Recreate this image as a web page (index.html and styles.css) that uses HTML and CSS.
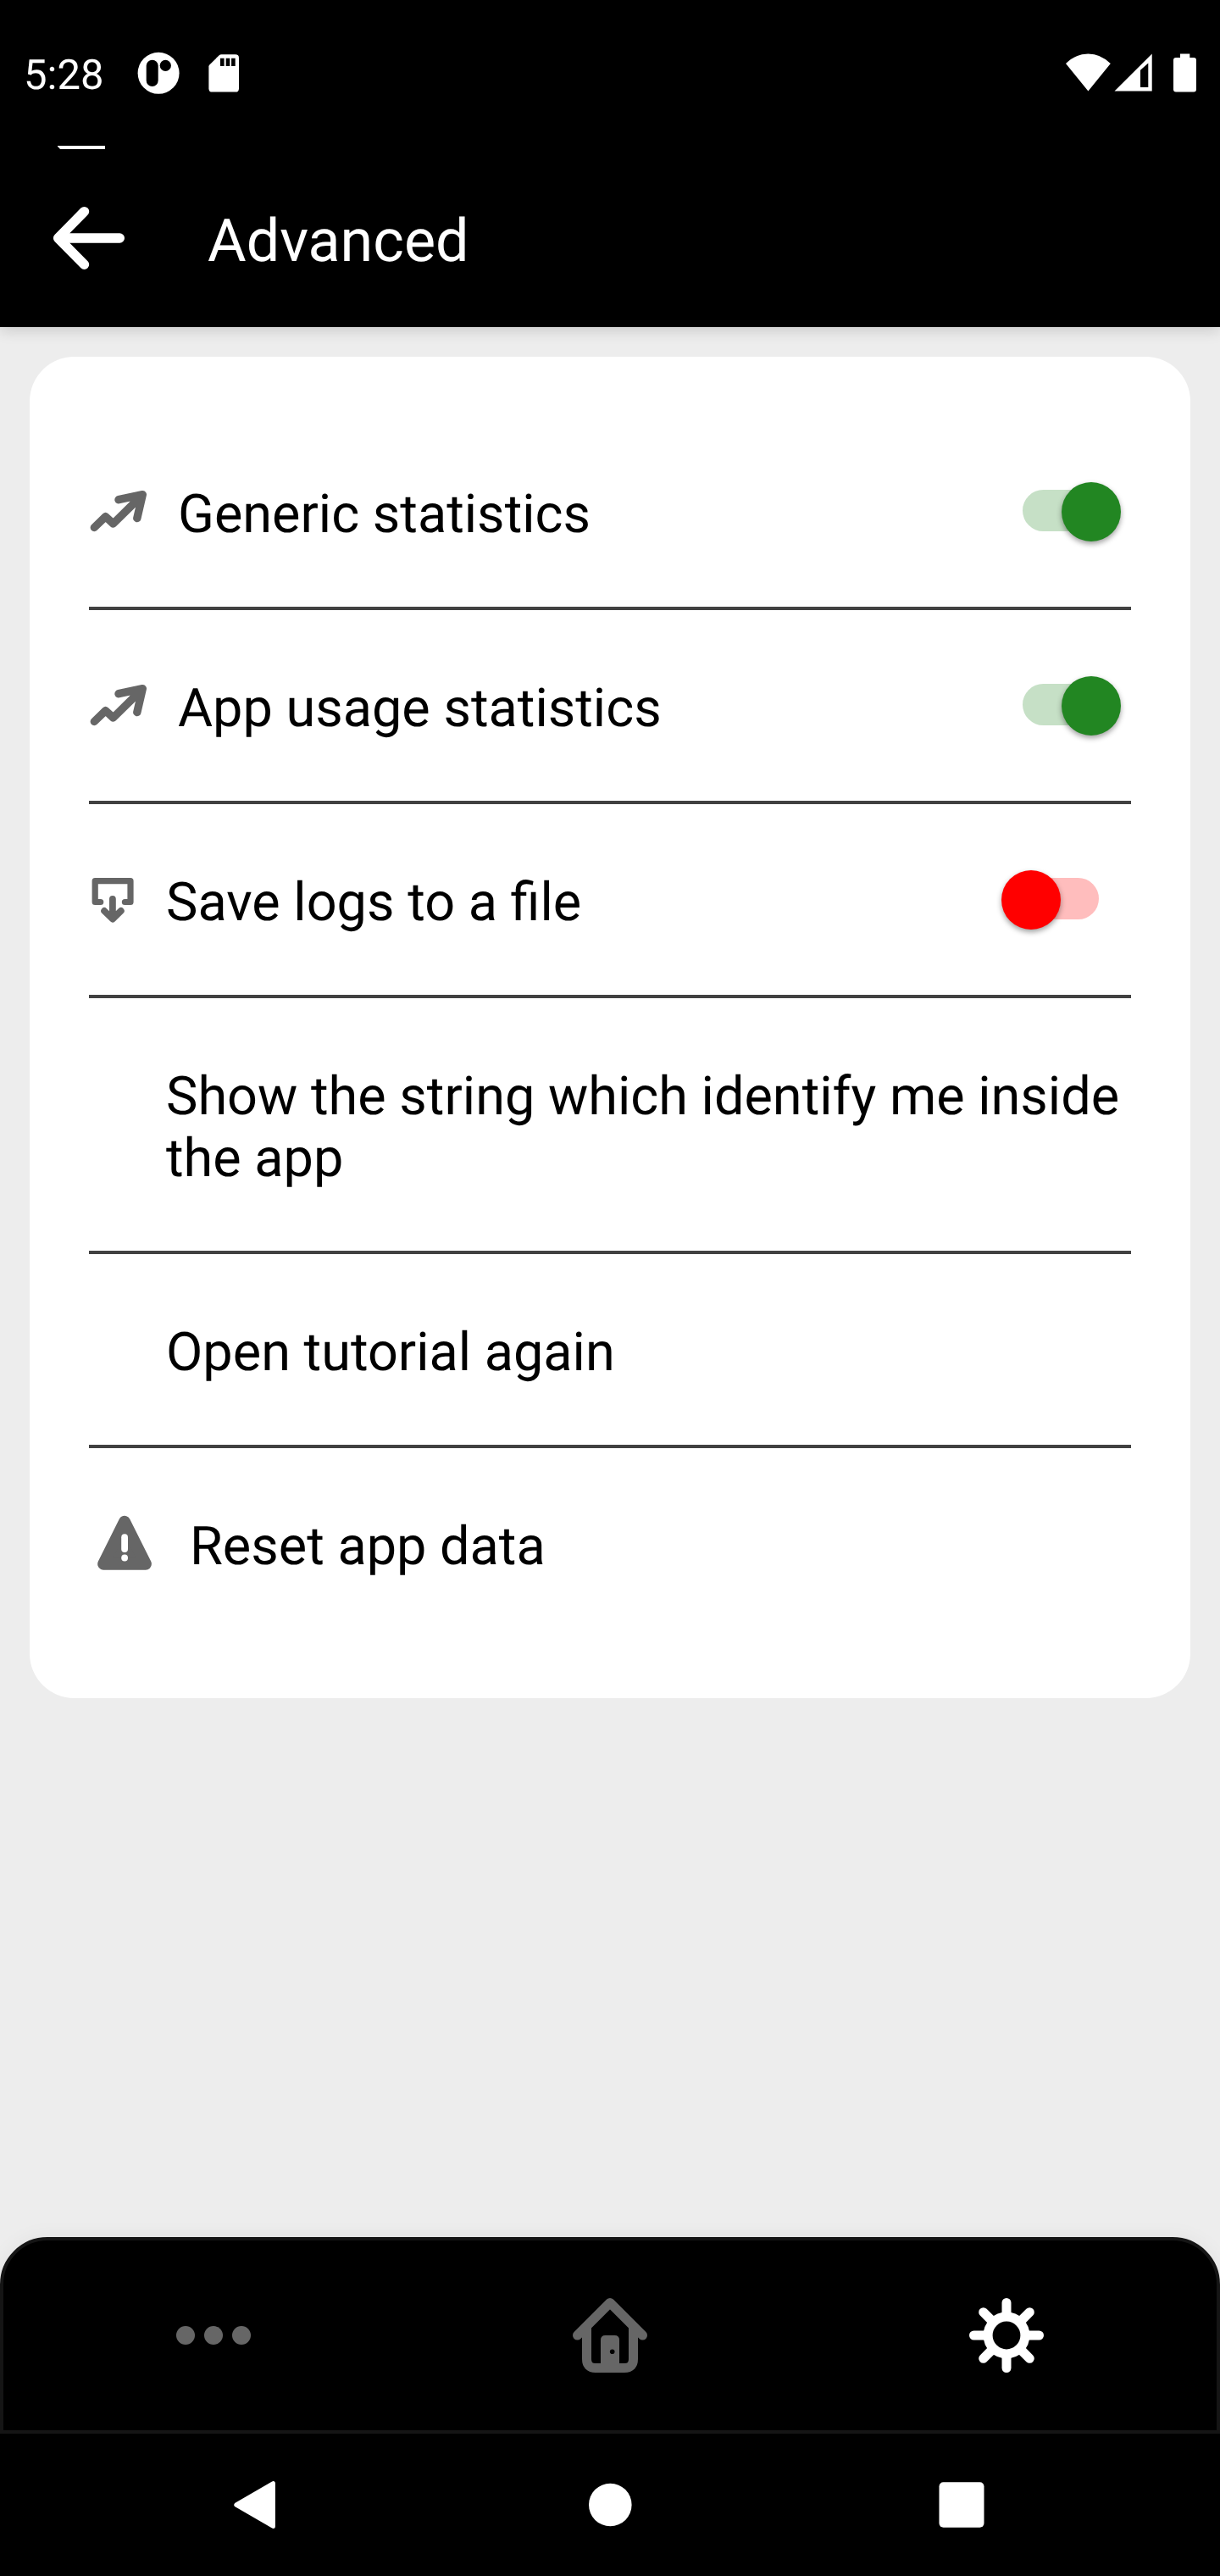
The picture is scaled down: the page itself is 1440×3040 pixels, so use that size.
FILE: index.html
```html
<!DOCTYPE html>
<html lang="en">
<head>
<meta charset="utf-8">
<title>Advanced</title>
<link rel="stylesheet" href="styles.css">
</head>
<body>
<div class="screen">
  <header class="top">
    <div class="status">
      <span class="clock">5:28</span>
      <svg class="status-app" width="50" height="50" viewBox="162 61 50 50"><circle cx="187.1" cy="86.3" r="24.5" fill="#fff"/><rect x="172.7" y="70.7" width="14" height="31.3" rx="7"/><circle cx="195.3" cy="77.4" r="6.6"/></svg>
      <svg class="status-sd" width="36" height="50" viewBox="246 61 36 50"><path fill="#fff" d="M261.3 64.2H277.8Q282 64.2 282 68.4V104.400Q282 108.600 277.800 108.600H250.600Q246.400 108.600 246.400 104.400V78.600Q246.400 77.400 247.300 76.500L258.700 65.200Q259.800 64.200 261.300 64.200Z"/><path d="M260 68.700h4.600V78H260zM266.700 68.700h4.600V78h-4.600zM273.100 68.700h4.600V78h-4.600z"/></svg>
      <svg class="status-signal" width="160" height="50" viewBox="1255 61 160 50" fill="#fff"><path d="M1284.400 107.400L1258 75Q1269.500 63.400 1284.400 63.400T1310.800 75Z"/><path fill-rule="evenodd" d="M1315.500 107.600L1359.700 63.600V107.600ZM1346 82.800V103H1355.300V74.400Z"/><path d="M1393 68V63.400H1404.300V68H1409Q1412 68 1412 71V105.600Q1412 108.600 1409 108.600H1388Q1385 108.600 1385 105.600V71Q1385 68 1388 68Z"/></svg>
    </div>
    <svg class="sliver" width="56" height="4" viewBox="0 0 56 4"><path fill="#fff" d="M0 0H56V4H3Q1.500 2 0 1Z"/></svg>
    <div class="titlebar">
      <svg class="back" width="88" height="76" viewBox="61 243 88 76"><path d="M99.500 249.600L68.600 281L99.500 312.300M68.600 281H141.300" fill="none" stroke="#fff" stroke-width="11.400" stroke-linecap="round" stroke-linejoin="round"/></svg>
      <h1 class="title">Advanced</h1>
    </div>
  </header>

  <main class="content">
    <section class="card">
      <div class="row">
        <svg class="icon icon-trend" width="70" height="52" viewBox="105 578 70 52"><path d="M111.300 622.500L124.600 609.600L133.600 618L168.300 583.800M140 589.700L168.300 583.600L161.800 611.600" fill="none" stroke="#666" stroke-width="9.400" stroke-linecap="round" stroke-linejoin="round"/></svg>
        <span class="label label-trend">Generic statistics</span>
        <span class="switch on"><span class="thumb"></span></span>
      </div>
      <div class="row">
        <svg class="icon icon-trend" width="70" height="52" viewBox="105 578 70 52"><path d="M111.300 622.500L124.600 609.600L133.600 618L168.300 583.800M140 589.700L168.300 583.600L161.800 611.600" fill="none" stroke="#666" stroke-width="9.400" stroke-linecap="round" stroke-linejoin="round"/></svg>
        <span class="label label-trend">App usage statistics</span>
        <span class="switch on"><span class="thumb"></span></span>
      </div>
      <div class="row">
        <svg class="icon icon-save" width="56" height="56" viewBox="105 1034 56 56"><g fill="none" stroke="#666" stroke-width="7.200" stroke-linecap="round" stroke-linejoin="round"><path d="M118.700 1064.500H112.200V1039.700H154V1064.500H147.400"/><path stroke-width="7.800" d="M132.900 1060.800V1084M123.100 1074.900L132.900 1084.600L142.800 1074.900"/></g></svg>
        <span class="label">Save logs to a file</span>
        <span class="switch off"><span class="thumb"></span></span>
      </div>
      <div class="row">
        <span class="label">Show the string which identify me inside<br>the app</span>
      </div>
      <div class="row">
        <span class="label">Open tutorial again</span>
      </div>
      <div class="row">
        <svg class="icon icon-warning" width="70" height="68" viewBox="112 1787 70 68"><path d="M147 1795.800L122.200 1845.700H171.900Z" fill="#666" stroke="#666" stroke-width="14" stroke-linejoin="round"/><path d="M147.100 1814.200V1828" stroke="#fff" stroke-width="7.800" stroke-linecap="round"/><circle cx="147.100" cy="1838.500" r="3.900" fill="#fff"/></svg>
        <span class="label label-warning">Reset app data</span>
      </div>
    </section>
  </main>

  <nav class="tabs">
    <svg width="88" height="88" viewBox="208 2712 88 88" fill="#666"><circle cx="219" cy="2756" r="11"/><circle cx="252" cy="2756" r="11"/><circle cx="285" cy="2756" r="11"/></svg>
    <svg width="88" height="88" viewBox="676 2712 88 88"><g fill="none" stroke="#666" stroke-width="11" stroke-linecap="round" stroke-linejoin="round"><path d="M681.500 2756L720 2717.500L758.500 2756"/><path stroke-linecap="butt" d="M692.500 2747V2784Q692.500 2794.500 703 2794.500H737Q747.500 2794.500 747.500 2784V2747"/></g><path fill="#666" d="M709 2792V2761.500Q709 2756 714.500 2756H725.500Q731 2756 731 2761.500V2792Z"/><circle cx="722.700" cy="2775.200" r="2.800"/></svg>
    <svg width="88" height="88" viewBox="-44 -44 88 88" fill="none" stroke="#fff" stroke-width="11" stroke-linecap="round"><circle r="21.900"/><path d="M0-24V-38.500M0 24V38.500M-24 0H-38.500M24 0H38.500M-17-17L-27.300-27.300M17-17L27.300-27.300M-17 17L-27.300 27.300M17 17L27.300 27.300"/></svg>
  </nav>

  <footer class="sysnav">
    <svg width="56" height="60" viewBox="272 2926 56 60"><path fill="#fff" stroke="#fff" stroke-width="5" stroke-linejoin="round" d="M278.800 2956L322.400 2930.600V2981.400Z"/></svg>
    <svg class="sys-home" width="56" height="60" viewBox="692 2926 56 60"><circle cx="720.300" cy="2956" r="25.300" fill="#fff"/></svg>
    <svg width="56" height="60" viewBox="1107 2926 56 60"><rect x="1108.500" y="2929.200" width="53" height="53.500" rx="5" fill="#fff"/></svg>
  </footer>
</div>
</body>
</html>
```
FILE: styles.css
```css
* {
  box-sizing: border-box;
}

body {
  margin: 0;
  background: #000;
  font-family: Roboto, "Liberation Sans", sans-serif;
  text-rendering: geometricPrecision;
}

svg {
  display: block;
  flex: none;
}

.screen {
  width: 1440px;
  height: 3040px;
  display: flex;
  flex-direction: column;
  background: #ededed;
  overflow: hidden;
}

.top {
  height: 386px;
  flex: none;
  background: #000;
  color: #fff;
  box-shadow: 0 4px 16px rgba(0, 0, 0, 0.15);
}

.status {
  height: 172px;
  display: flex;
  align-items: flex-start;
  padding: 61px 25px 0 28px;
}

.clock {
  width: 134px;
  margin-top: 1px;
  font-size: 49px;
  line-height: 53px;
}

.status-sd {
  margin-left: 34px;
}

.status-signal {
  margin-left: auto;
}

.sliver {
  margin-left: 68px;
}

.titlebar {
  height: 210px;
  display: flex;
  align-items: flex-start;
  padding: 67px 0 0 61px;
}

.title {
  margin: 1px 0 0 96px;
  font-size: 70px;
  font-weight: 400;
  line-height: 82px;
}

.content {
  flex: 1;
  padding: 35px 35px 0;
}

.card {
  padding: 70px;
  border-radius: 52.5px;
  background: #fff;
}

.row {
  display: flex;
  align-items: flex-start;
  padding: 80px 0 72px;
  border-bottom: 4px solid #414141;
}

.row:last-child {
  border-bottom: 0;
}

.label {
  font-size: 63px;
  line-height: 73px;
  color: #000;
  margin-left: 91px;
  white-space: nowrap;
}

.icon + .label {
  margin-left: 35px;
}

.icon-trend {
  margin-top: 7px;
}

.icon-save {
  margin-top: 5px;
}

.icon-warning {
  margin: -2px 0 0 7px;
}

.icon + .label-warning {
  margin-left: 42px;
}

.switch {
  position: relative;
  width: 90px;
  height: 49px;
  margin: 7px 38px 0 auto;
  border-radius: 24.500px;
}

.switch.on {
  background: #c6e0c6;
}

.switch.off {
  background: #ffbdbd;
}

.thumb {
  position: absolute;
  top: -9.500px;
  width: 70px;
  height: 70px;
  border-radius: 50%;
  box-shadow: 0 3px 6px rgba(0, 0, 0, 0.38);
}

.on .thumb {
  right: -26px;
  background: #228622;
}

.off .thumb {
  left: -25.500px;
  background: #ff0000;
}

.tabs {
  height: 232px;
  flex: none;
  display: flex;
  justify-content: space-between;
  align-items: center;
  padding: 0 204px;
  border: 4px solid #151515;
  border-radius: 56px 56px 0 0;
  background: #000;
  box-shadow: 0 0 24px rgba(0, 0, 0, 0.05);
}

.sysnav {
  height: 168px;
  flex: none;
  display: flex;
  justify-content: space-between;
  align-items: center;
  padding: 0 277px 0 272px;
  background: #000;
}

.sys-home {
  margin-left: 5px;
}
```
